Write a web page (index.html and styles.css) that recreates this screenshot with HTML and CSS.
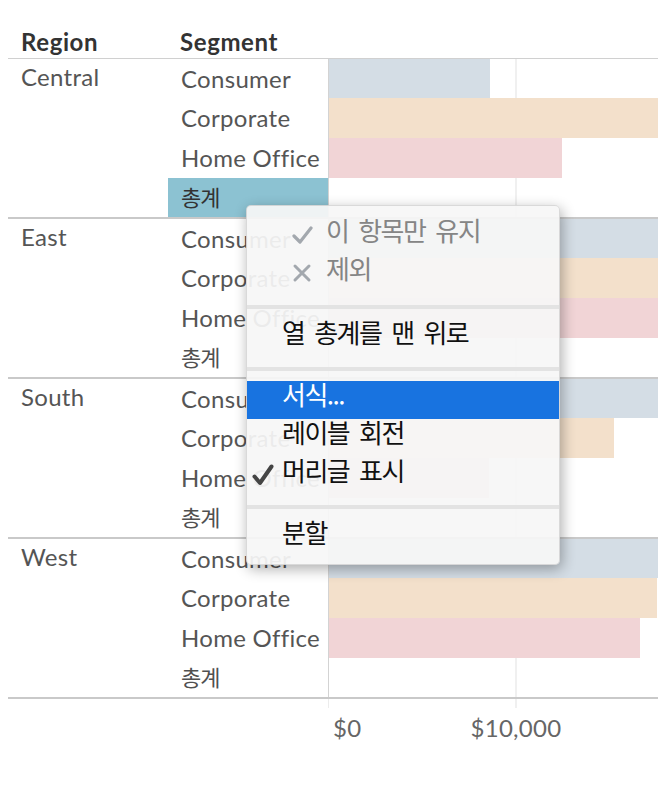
FILE: index.html
```html
<!DOCTYPE html>
<html lang="ko">
<head>
<meta charset="utf-8">
<title>Region Segment</title>
<link rel="stylesheet" href="styles.css">
</head>
<body>
<div class="view">
  <div class="head">
    <div class="hcell">Region</div>
    <div class="hcell">Segment</div>
  </div>

  <div class="region">
    <div class="rlabel">Central</div>
    <div class="rows">
      <div class="row"><div class="seg">Consumer</div><div class="track"><div class="bar consumer" style="width:161px"></div></div></div>
      <div class="row"><div class="seg">Corporate</div><div class="track"><div class="bar corporate" style="width:329px"></div></div></div>
      <div class="row"><div class="seg">Home Office</div><div class="track"><div class="bar home" style="width:233px"></div></div></div>
      <div class="row"><div class="seg total selected">총계</div><div class="track"></div></div>
    </div>
  </div>

  <div class="region">
    <div class="rlabel">East</div>
    <div class="rows">
      <div class="row"><div class="seg">Consumer</div><div class="track"><div class="bar consumer" style="width:329px"></div></div></div>
      <div class="row"><div class="seg">Corporate</div><div class="track"><div class="bar corporate" style="width:329px"></div></div></div>
      <div class="row"><div class="seg">Home Office</div><div class="track"><div class="bar home" style="width:329px"></div></div></div>
      <div class="row"><div class="seg total">총계</div><div class="track"></div></div>
    </div>
  </div>

  <div class="region">
    <div class="rlabel">South</div>
    <div class="rows">
      <div class="row"><div class="seg">Consumer</div><div class="track"><div class="bar consumer" style="width:329px"></div></div></div>
      <div class="row"><div class="seg">Corporate</div><div class="track"><div class="bar corporate" style="width:285px"></div></div></div>
      <div class="row"><div class="seg">Home Office</div><div class="track"><div class="bar home" style="width:160px"></div></div></div>
      <div class="row"><div class="seg total">총계</div><div class="track"></div></div>
    </div>
  </div>

  <div class="region">
    <div class="rlabel">West</div>
    <div class="rows">
      <div class="row"><div class="seg">Consumer</div><div class="track"><div class="bar consumer" style="width:329px"></div></div></div>
      <div class="row"><div class="seg">Corporate</div><div class="track"><div class="bar corporate" style="width:328px"></div></div></div>
      <div class="row"><div class="seg">Home Office</div><div class="track"><div class="bar home" style="width:311px"></div></div></div>
      <div class="row"><div class="seg total">총계</div><div class="track"></div></div>
    </div>
  </div>

  <div class="axis">
    <div class="ticks"></div>
    <div class="labels">
      <span class="lbl zero">$0</span>
      <span class="lbl tick">$10,000</span>
    </div>
  </div>

  <div class="menu">
    <div class="item disabled">
      <span class="mark">
        <svg width="21" height="18" viewBox="0 0 21 18"><polyline points="2,10 8,16 19,2" fill="none" stroke="#a3a8ae" stroke-width="3.2" stroke-linecap="round" stroke-linejoin="round"/></svg>
      </span>
      <span class="txt">이 항목만 유지</span>
    </div>
    <div class="item disabled">
      <span class="mark">
        <svg width="20" height="20" viewBox="0 0 20 20"><path d="M3 3 L17 17 M17 3 L3 17" fill="none" stroke="#a3a8ae" stroke-width="3" stroke-linecap="round"/></svg>
      </span>
      <span class="txt">제외</span>
    </div>
    <div class="sep first"></div>
    <div class="item"><span class="mark"></span><span class="txt">열 총계를 맨 위로</span></div>
    <div class="sep"></div>
    <div class="item active"><span class="mark"></span><span class="txt">서식...</span></div>
    <div class="item"><span class="mark"></span><span class="txt">레이블 회전</span></div>
    <div class="item">
      <span class="mark">
        <svg width="22" height="22" viewBox="0 0 22 22"><polyline points="2.5,12.5 8,19 19.5,2.5" fill="none" stroke="#444" stroke-width="4" stroke-linecap="round" stroke-linejoin="round"/></svg>
      </span>
      <span class="txt">머리글 표시</span>
    </div>
    <div class="sep"></div>
    <div class="item"><span class="mark"></span><span class="txt">분할</span></div>
  </div>
</div>
</body>
</html>
```

FILE: styles.css
```css
html, body {
  margin: 0;
  padding: 0;
  background: #ffffff;
}

body {
  font-family: "Lato", "Noto Sans CJK KR", sans-serif;
  font-size: 24px;
  letter-spacing: 0.3px;
  color: #555555;
}

.view {
  position: relative;
  width: 650px;
  height: 792px;
  margin-left: 8px;
  overflow: hidden;
}

/* header */
.head {
  display: flex;
  align-items: flex-end;
  box-sizing: border-box;
  height: 59px;
  padding-bottom: 2px;
  border-bottom: 1px solid #d0d0d0;
}

.hcell {
  width: 160px;
  box-sizing: border-box;
  padding-left: 13px;
  font-weight: 700;
  letter-spacing: 0.6px;
  color: #333333;
  line-height: 28px;
}

.hcell + .hcell {
  padding-left: 12px;
}

/* regions */
.region {
  display: flex;
  border-bottom: 2px solid #c9c9c9;
}

.rlabel {
  width: 160px;
  flex: none;
  box-sizing: border-box;
  padding-left: 13px;
  padding-top: 4px;
  line-height: 28px;
}

.rows {
  flex: 1;
  display: flex;
  flex-direction: column;
}

.row {
  display: flex;
  height: 40px;
}

.row:first-child,
.row:last-child {
  height: 39px;
}

.seg {
  width: 160px;
  flex: none;
  box-sizing: border-box;
  padding-left: 13px;
  display: flex;
  align-items: center;
  line-height: 28px;
}

.seg.total {
  font-size: 22px;
  letter-spacing: -1px;
  color: #505050;
}

.seg.selected {
  background: #8cc2d2;
  color: #333333;
}

.track {
  flex: 1;
  border-left: 1px solid #d3d3d3;
  background-image: linear-gradient(to right,
      transparent 186px, #f0f0f0 186px, #f0f0f0 188px, transparent 188px);
}

.bar {
  height: 100%;
}

.bar.consumer { background: #d4dde5; }
.bar.corporate { background: #f3e0cb; }
.bar.home { background: #f1d4d6; }

/* axis */
.axis {
  margin-left: 320px;
}

.ticks {
  height: 9px;
  border-left: 1px solid #ececec;
  background-image: linear-gradient(to right,
      transparent 186px, #f0f0f0 186px, #f0f0f0 188px, transparent 188px);
}

.labels {
  display: flex;
  padding-top: 6px;
  line-height: 28px;
  color: #666666;
}

.lbl.zero {
  width: 128px;
  padding-left: 5px;
  box-sizing: border-box;
}

.lbl.tick {
  width: 120px;
  text-align: center;
}

/* context menu */
.menu {
  position: absolute;
  left: 238px;
  top: 205px;
  width: 314px;
  box-sizing: border-box;
  padding: 11px 0 7px;
  background: rgba(246, 246, 246, 0.93);
  border: 1px solid rgba(0, 0, 0, 0.12);
  border-radius: 5px;
  box-shadow: 2px 4px 14px rgba(0, 0, 0, 0.32);
  font-family: "Noto Sans CJK KR", "Lato", sans-serif;
  font-size: 26px;
  letter-spacing: -1.5px;
  word-spacing: 4px;
  color: #111111;
}

.item {
  display: flex;
  align-items: center;
  box-sizing: border-box;
  height: 38px;
  padding-left: 5px;
  padding-bottom: 14px;
}

.mark {
  width: 30px;
  flex: none;
  display: flex;
  align-items: center;
}

.item .mark svg {
  position: relative;
  top: 6px;
}

.item.disabled {
  padding-left: 45px;
  color: #858585;
}

.item.disabled .mark {
  width: 34px;
}

.item.active {
  background: #1873e0;
  color: #ffffff;
}

.sep {
  height: 4px;
  margin: 10px 0;
  background: #e3e3e3;
}

.sep.first {
  margin-top: 12px;
}
```
